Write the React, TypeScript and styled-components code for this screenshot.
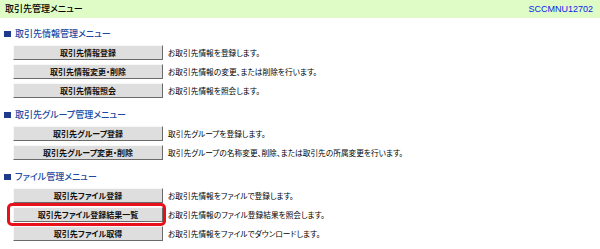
import React from 'react';
import styled, { createGlobalStyle } from 'styled-components';

const GlobalStyle = createGlobalStyle`
  html, body {
    margin: 0;
    padding: 0;
    background: #ffffff;
  }
  body {
    font-family: "Noto Sans CJK JP", "Liberation Sans", sans-serif;
    font-feature-settings: "palt";
    color: #000;
  }
`;

const Page = styled.div`
  width: 600px;
  height: 249px;
  overflow: hidden;
`;

const TitleBar = styled.div`
  height: 18px;
  background: #dffcc6;
  display: flex;
  align-items: center;
  justify-content: space-between;
  padding: 0 7px 0 5px;
`;

const Title = styled.span`
  font-size: 9px;
  font-weight: 500;
  line-height: 18px;
`;

const ScreenId = styled.span`
  font-family: "Liberation Sans", Arial, sans-serif;
  font-size: 9px;
  color: #0a22f0;
  line-height: 18px;
`;

const Section = styled.section<{ $first?: boolean }>`
  margin-top: ${(p) => (p.$first ? '10px' : '11px')};
`;

const Heading = styled.h2`
  margin: 0 0 5px 0;
  padding-left: 4px;
  height: 12px;
  display: flex;
  align-items: center;
  gap: 4px;
  font-size: 9px;
  font-weight: 500;
  color: #1c4aa2;
  line-height: 12px;

  &:before {
    content: '';
    width: 7px;
    height: 6px;
    background: #1f3a8a;
  }
`;

const Rows = styled.div`
  display: flex;
  flex-direction: column;
  gap: 4px;
  padding-left: 13px;
`;

const Row = styled.div`
  display: flex;
  align-items: center;
  gap: 5px;
  height: 15px;
  line-height: 15px;
`;

const ButtonWrap = styled.div`
  position: relative;
  flex: 0 0 150px;
  height: 15px;
  line-height: 13px;
`;

const MenuButton = styled.button`
  display: block;
  box-sizing: border-box;
  width: 100%;
  height: 15px;
  margin: 0;
  padding: 0;
  background: #dedede;
  border: 1px solid;
  border-color: #f8f8f8 #6a6a6a #6a6a6a #f8f8f8;
  font-family: "Noto Sans CJK JP", sans-serif;
  font-feature-settings: "palt";
  font-size: 8px;
  font-weight: 700;
  line-height: 13px;
  color: #111;
  text-align: center;
`;

const Highlight = styled.span`
  position: absolute;
  left: -6px;
  top: -4px;
  right: -3px;
  bottom: -4px;
  border: 3px solid #e8101a;
  border-radius: 5px;
  pointer-events: none;
`;

const Desc = styled.span`
  font-size: 7.7px;
  line-height: 15px;
  white-space: nowrap;
`;

type Item = { label: string; desc: string; mark?: boolean };

const sections: { title: string; items: Item[] }[] = [
  {
    title: '取引先情報管理メニュー',
    items: [
      { label: '取引先情報登録', desc: 'お取引先情報を登録します。' },
      { label: '取引先情報変更・削除', desc: 'お取引先情報の変更、または削除を行います。' },
      { label: '取引先情報照会', desc: 'お取引先情報を照会します。' },
    ],
  },
  {
    title: '取引先グループ管理メニュー',
    items: [
      { label: '取引先グループ登録', desc: '取引先グループを登録します。' },
      {
        label: '取引先グループ変更・削除',
        desc: '取引先グループの名称変更、削除、または取引先の所属変更を行います。',
      },
    ],
  },
  {
    title: 'ファイル管理メニュー',
    items: [
      { label: '取引先ファイル登録', desc: 'お取引先情報をファイルで登録します。' },
      {
        label: '取引先ファイル登録結果一覧',
        desc: 'お取引先情報のファイル登録結果を照会します。',
        mark: true,
      },
      { label: '取引先ファイル取得', desc: 'お取引先情報をファイルでダウンロードします。' },
    ],
  },
];

const App: React.FC = () => {
  return (
    <Page>
      <GlobalStyle />
      <TitleBar>
        <Title>取引先管理メニュー</Title>
        <ScreenId>SCCMNU12702</ScreenId>
      </TitleBar>
      {sections.map((s, i) => (
        <Section key={s.title} $first={i === 0}>
          <Heading>{s.title}</Heading>
          <Rows>
            {s.items.map((item) => (
              <Row key={item.label}>
                <ButtonWrap>
                  <MenuButton type="button">{item.label}</MenuButton>
                  {item.mark && <Highlight />}
                </ButtonWrap>
                <Desc>{item.desc}</Desc>
              </Row>
            ))}
          </Rows>
        </Section>
      ))}
    </Page>
  );
};

export default App;
